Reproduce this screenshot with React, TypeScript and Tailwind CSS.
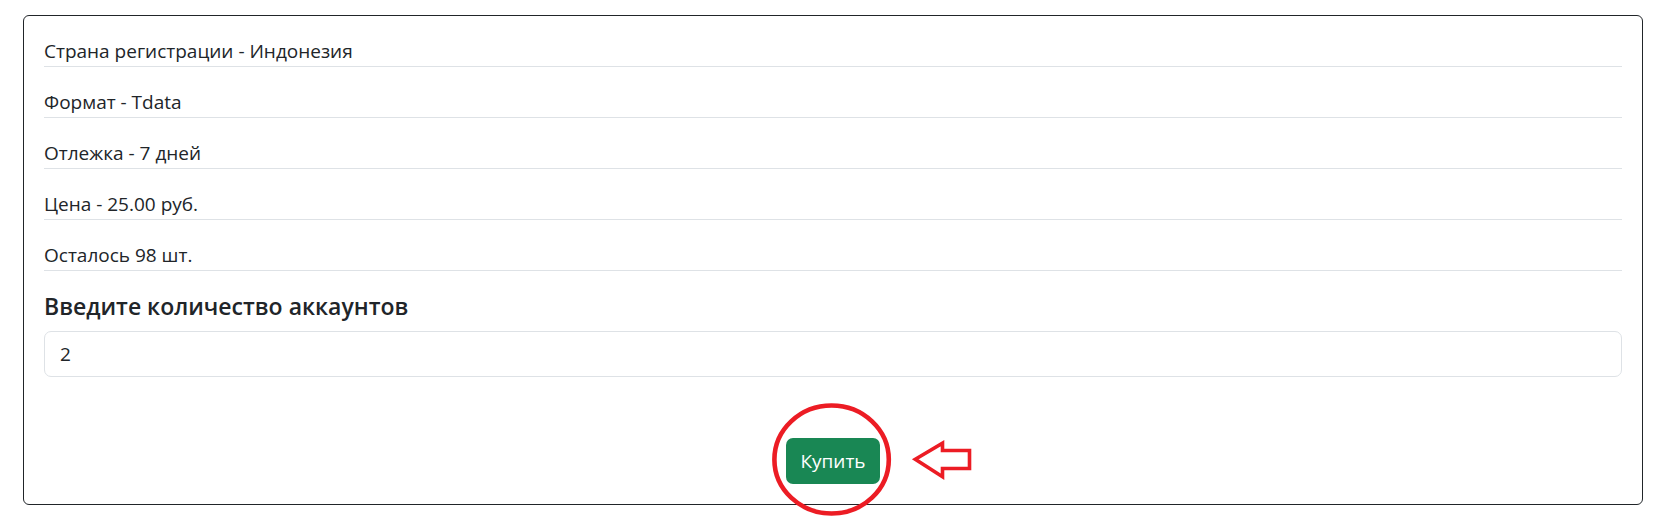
import React from "react";

const rows = [
  "Страна регистрации - Индонезия",
  "Формат - Tdata",
  "Отлежка - 7 дней",
  "Цена - 25.00 руб.",
  "Осталось 98 шт.",
];

export default function App() {
  return (
    <div
      className="min-h-[529px] bg-white pl-[23px] pr-[28px] pt-[15px] text-[#212529]"
      style={{ fontFamily: '"Open Sans", "Noto Sans", sans-serif' }}
    >
      <div className="rounded-[6px] border border-[#212529] p-[20px]">
        {rows.map((r) => (
          <p
            key={r}
            className="mb-[20px] border-b border-[#dee2e6] text-[19px] leading-[30px]"
          >
            {r}
          </p>
        ))}
        <h5 className="mb-[10px] text-[23px] font-semibold leading-[30px]">
          Введите количество аккаунтов
        </h5>
        <input
          type="text"
          defaultValue="2"
          className="block h-[46px] w-full rounded-[7px] border border-[#dee2e6] px-[15px] text-[19px] text-[#212529] outline-none"
        />
        <div className="mt-[61px] flex justify-center">
          <div className="relative">
            <button className="h-[46px] w-[94px] rounded-[7px] bg-[#198754] text-[19px] text-white">
              Купить
            </button>
            <svg
              className="pointer-events-none absolute left-[-40px] top-[-40px] overflow-visible"
              width="240"
              height="130"
              viewBox="0 0 240 130"
            >
              <ellipse
                cx="85.6"
                cy="61.5"
                rx="57.2"
                ry="54"
                fill="none"
                stroke="#ec1c24"
                strokeWidth="4.6"
              />
              <path
                d="M169.3 61.3 L196.5 45.2 L196.5 52.5 L223.5 52.5 L223.5 70.5 L196.5 70.5 L196.5 78.8 Z"
                fill="none"
                stroke="#ec1c24"
                strokeWidth="3.6"
                strokeLinejoin="miter"
              />
            </svg>
          </div>
        </div>
      </div>
    </div>
  );
}
